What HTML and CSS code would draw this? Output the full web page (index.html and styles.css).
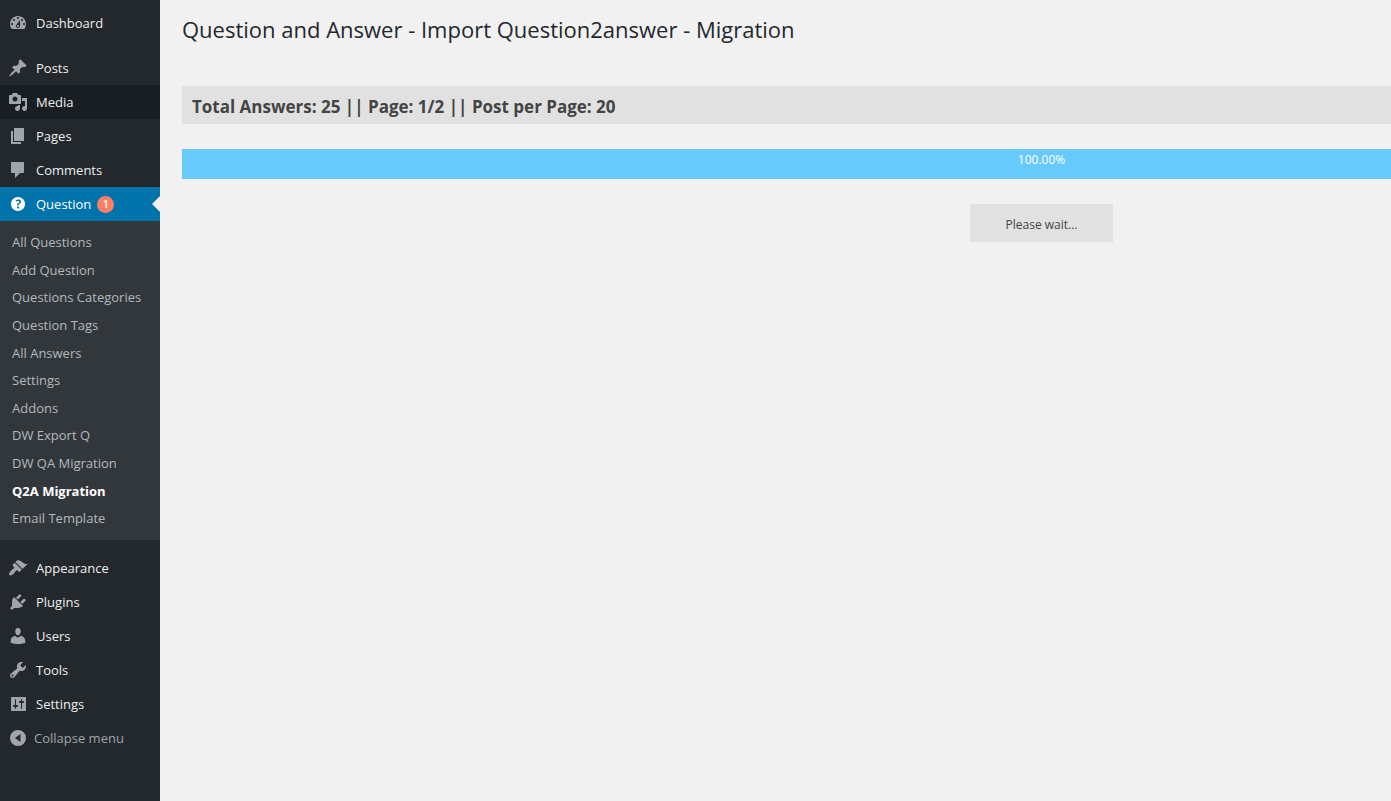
FILE: index.html
```html
<!DOCTYPE html>
<html lang="en">
<head>
    <meta charset="UTF-8">
    <meta name="viewport" content="width=device-width, initial-scale=1.0">
    <title>Question and Answer - Import Question2answer - Migration</title>
    <link rel="stylesheet" href="styles.css">
</head>
<body>
    <div class="admin">
        <nav class="sidebar">
            <ul class="menu">
                <li>
                    <a href="#" class="menu-link">
                        <svg class="icon" viewBox="0 0 20 20"><path fill-rule="evenodd" d="M3.76 16h12.48c1.1-1.37 1.76-3.11 1.76-5 0-4.42-3.58-8-8-8s-8 3.58-8 8c0 1.89.66 3.63 1.76 5zM10 4c.55 0 1 .45 1 1s-.45 1-1 1-1-.45-1-1 .45-1 1-1zM6 6c.55 0 1 .45 1 1s-.45 1-1 1-1-.45-1-1 .45-1 1-1zm8 0c.55 0 1 .45 1 1s-.45 1-1 1-1-.45-1-1 .45-1 1-1zm-5.37 5.55L12 7v6c0 1.1-.9 2-2 2s-2-.9-2-2c0-.57.24-1.08.63-1.45zM4 10c.55 0 1 .45 1 1s-.45 1-1 1-1-.45-1-1 .45-1 1-1zm12 0c.55 0 1 .45 1 1s-.45 1-1 1-1-.45-1-1 .45-1 1-1zm-5 3c0-.55-.45-1-1-1s-1 .45-1 1 .45 1 1 1 1-.45 1-1z"/></svg>
                        Dashboard
                    </a>
                </li>
                <li class="separator"></li>
                <li>
                    <a href="#" class="menu-link">
                        <svg class="icon" viewBox="0 0 20 20"><path d="M10.44 3.02l1.82-1.82 6.36 6.35-1.83 1.82c-1.05-.68-2.48-.57-3.41.36l-.75.75c-.92.93-1.04 2.35-.35 3.41l-1.83 1.82-2.41-2.41-2.8 2.79c-.42.42-3.38 2.71-3.8 2.29s1.86-3.39 2.28-3.81l2.79-2.79L4.1 9.36l1.83-1.82c1.05.69 2.48.57 3.4-.36l.75-.75c.93-.92 1.05-2.35.36-3.41z"/></svg>
                        Posts
                    </a>
                </li>
                <li>
                    <a href="#" class="menu-link hovered">
                        <svg class="icon" viewBox="0 0 20 20"><path fill-rule="evenodd" d="M13 11V4c0-.55-.45-1-1-1h-1.67L9 1H5L3.67 3H2c-.55 0-1 .45-1 1v7c0 .55.45 1 1 1h10c.55 0 1-.45 1-1zM7 4.5c1.38 0 2.5 1.12 2.5 2.5S8.38 9.5 7 9.5 4.5 8.38 4.5 7 5.62 4.5 7 4.5zM14 6h5v10.5c0 1.38-1.12 2.5-2.5 2.5S14 17.88 14 16.5s1.12-2.5 2.5-2.5c.17 0 .34.02.5.05V9h-3V6zm-4 8.05V13h2v3.5c0 1.38-1.12 2.5-2.5 2.5S7 17.88 7 16.5 8.12 14 9.5 14c.17 0 .34.02.5.05z"/></svg>
                        Media
                    </a>
                </li>
                <li>
                    <a href="#" class="menu-link">
                        <svg class="icon" viewBox="0 0 20 20"><path d="M6 15V2h10v13H6zm-1 1h8v2H3V5h2v11z"/></svg>
                        Pages
                    </a>
                </li>
                <li>
                    <a href="#" class="menu-link">
                        <svg class="icon" viewBox="0 0 20 20"><path d="M4 2h11c.55 0 1 .45 1 1v9c0 .55-.45 1-1 1h-3l-5 5v-5H4c-.55 0-1-.45-1-1V3c0-.55.45-1 1-1z"/></svg>
                        Comments
                    </a>
                </li>
                <li>
                    <a href="#" class="menu-link current">
                        <svg class="icon" viewBox="0 0 20 20"><path fill-rule="evenodd" d="M17 10c0-3.87-3.14-7-7-7-3.87 0-7 3.13-7 7s3.13 7 7 7c3.86 0 7-3.13 7-7zm-6.3 1.48H9.14v-.43c0-.38.08-.7.24-.98s.46-.57.88-.89c.41-.29.68-.53.81-.71.14-.18.2-.39.2-.62 0-.25-.09-.44-.28-.58-.19-.13-.45-.19-.79-.19-.58 0-1.25.15-2 .45l-.64-1.28c.87-.49 1.8-.74 2.77-.74.81 0 1.45.2 1.92.58.48.39.71.91.71 1.55 0 .43-.09.8-.29 1.11-.19.32-.57.67-1.11 1.06-.38.28-.61.49-.71.63-.1.15-.15.34-.15.57v.47zm-1.47 2.74c-.18-.17-.27-.42-.27-.73 0-.33.08-.58.26-.75s.43-.25.77-.25c.32 0 .57.09.75.26s.27.42.27.74c0 .3-.09.55-.27.72-.18.18-.43.27-.75.27-.33 0-.58-.09-.76-.26z"/></svg>
                        <span>Question</span>
                        <span class="count">1</span>
                    </a>
                    <ul class="submenu">
                        <li><a href="#">All Questions</a></li>
                        <li><a href="#">Add Question</a></li>
                        <li><a href="#">Questions Categories</a></li>
                        <li><a href="#">Question Tags</a></li>
                        <li><a href="#">All Answers</a></li>
                        <li><a href="#">Settings</a></li>
                        <li><a href="#">Addons</a></li>
                        <li><a href="#">DW Export Q</a></li>
                        <li><a href="#">DW QA Migration</a></li>
                        <li><a href="#" class="active">Q2A Migration</a></li>
                        <li><a href="#">Email Template</a></li>
                    </ul>
                </li>
                <li class="separator"></li>
                <li>
                    <a href="#" class="menu-link">
                        <svg class="icon" viewBox="0 0 20 20"><path d="M14.48 11.06L7.41 3.99l1.5-1.5c.5-.56 2.3-.47 3.51.32 1.21.8 1.43 1.28 2.91 2.1 1.18.64 2.45 1.26 4.45.85zm-.71.71L6.7 4.7 4.93 6.47c-.39.39-.39 1.02 0 1.41l1.06 1.06c.39.39.39 1.03 0 1.42-.6.6-1.43 1.11-2.21 1.69-.35.26-.7.53-1.01.84C1.43 14.23.4 16.08 1.4 17.07c.99 1 2.84-.03 4.18-1.36.31-.31.58-.66.85-1.02.57-.78 1.08-1.61 1.69-2.21.39-.39 1.02-.39 1.41 0l1.06 1.06c.39.39 1.02.39 1.41 0z"/></svg>
                        Appearance
                    </a>
                </li>
                <li>
                    <a href="#" class="menu-link">
                        <svg class="icon" viewBox="0 0 20 20"><path d="M13.11 4.36L9.87 7.6 8 5.73l3.24-3.24c.35-.34 1.05-.2 1.56.32.52.51.66 1.21.31 1.55zm-8 1.77l.91-1.12 9.01 9.01-1.19.84c-.71.71-2.63 1.16-3.82 1.16H6.14L4.9 17.26c-.59.59-1.54.59-2.12 0-.59-.58-.59-1.53 0-2.12l1.24-1.24v-3.88c0-1.13.4-3.19 1.09-3.89zm7.26 3.97l3.24-3.24c.34-.35 1.04-.21 1.55.31.52.51.66 1.21.31 1.55l-3.24 3.25z"/></svg>
                        Plugins
                    </a>
                </li>
                <li>
                    <a href="#" class="menu-link">
                        <svg class="icon" viewBox="0 0 20 20"><path d="M10 9.25c-2.27 0-2.73-3.44-2.73-3.44C7 4.02 7.82 2 9.97 2c2.16 0 2.98 2.02 2.71 3.81 0 0-.41 3.44-2.68 3.44zm0 2.57L12.72 10c2.39 0 4.52 2.33 4.52 4.53v2.49s-3.65 1.13-7.24 1.13c-3.65 0-7.24-1.13-7.24-1.13v-2.49c0-2.25 1.94-4.48 4.47-4.48z"/></svg>
                        Users
                    </a>
                </li>
                <li>
                    <a href="#" class="menu-link">
                        <svg class="icon" viewBox="0 0 20 20"><path fill-rule="evenodd" d="M16.68 9.77c-1.34 1.34-3.3 1.67-4.95.99l-5.41 6.52c-.99.99-2.59.99-3.58 0s-.99-2.59 0-3.57l6.52-5.42c-.68-1.65-.35-3.61.99-4.95 1.28-1.28 3.12-1.62 4.72-1.06l-2.89 2.89 2.82 2.82 2.86-2.87c.53 1.58.18 3.39-1.08 4.65zM3.81 16.21c.4.39 1.04.39 1.43 0 .4-.4.4-1.04 0-1.43-.39-.4-1.03-.4-1.43 0-.39.39-.39 1.03 0 1.43z"/></svg>
                        Tools
                    </a>
                </li>
                <li>
                    <a href="#" class="menu-link">
                        <svg class="icon" viewBox="0 0 20 20"><path fill-rule="evenodd" d="M18 16V4c0-.55-.45-1-1-1H4c-.55 0-1 .45-1 1v12c0 .55.45 1 1 1h13c.55 0 1-.45 1-1zM8 11h1c.55 0 1 .45 1 1s-.45 1-1 1H8v1.5c0 .28-.22.5-.5.5s-.5-.22-.5-.5V13H6c-.55 0-1-.45-1-1s.45-1 1-1h1V5.5c0-.28.22-.5.5-.5s.5.22.5.5V11zm5-2h-1c-.55 0-1-.45-1-1s.45-1 1-1h1V5.5c0-.28.22-.5.5-.5s.5.22.5.5V7h1c.55 0 1 .45 1 1s-.45 1-1 1h-1v5.5c0 .28-.22.5-.5.5s-.5-.22-.5-.5V9z"/></svg>
                        Settings
                    </a>
                </li>
                <li>
                    <button type="button" class="collapse">
                        <svg class="icon" viewBox="0 0 20 20"><path fill-rule="evenodd" d="M10 2a8 8 0 1 0 0 16 8 8 0 0 0 0-16zM12.500 6v8L7 10z"/></svg>
                        Collapse menu
                    </button>
                </li>
            </ul>
        </nav>

        <main class="content">
            <div class="wrap">
                <h1>Question and Answer - Import Question2answer - Migration</h1>
                <h3 class="summary">Total Answers: 25 || Page: 1/2 || Post per Page: 20</h3>
                <div class="progress">
                    <div class="progress-bar" style="width: 100%">100.00%</div>
                </div>
                <button type="button" class="wait">Please wait...</button>
            </div>
        </main>
    </div>
</body>
</html>
```

FILE: styles.css
```css
* {
    margin: 0;
    padding: 0;
    box-sizing: border-box;
}

body {
    background: #f1f1f1;
    color: #444;
    font-family: 'Segoe UI', 'Open Sans', 'Noto Sans', sans-serif;
    font-size: 13px;
}

.admin {
    display: flex;
    min-height: 100vh;
}

/* Sidebar */
.sidebar {
    flex: 0 0 160px;
    padding-top: 6px;
    background: #23282d;
}

.menu, .submenu {
    list-style: none;
}

.menu-link, .collapse {
    display: flex;
    align-items: center;
    width: 100%;
    height: 34px;
    padding-left: 8px;
    gap: 8px;
    color: #eee;
    line-height: 20px;
    text-decoration: none;
}

.icon {
    flex: none;
    width: 20px;
    height: 20px;
    fill: #a0a5aa;
}

.hovered {
    background: #191e23;
}

.current {
    position: relative;
    background: #0073aa;
    color: #fff;
}

.current .icon {
    fill: #fff;
}

/* Arrow pointing at the content */
.current::after {
    content: '';
    position: absolute;
    top: 9px;
    right: 0;
    border: 8px solid transparent;
    border-left-width: 0;
    border-right-color: #f1f1f1;
}

.count {
    width: 17px;
    height: 17px;
    margin-left: -2px;
    border-radius: 50%;
    background: #fd8064;
    font-size: 10px;
    font-weight: 600;
    line-height: 17px;
    text-align: center;
}

.separator {
    height: 11px;
}

.submenu {
    display: grid;
    grid-auto-rows: 1fr;
    min-height: 319px;
    padding: 7px 0 8px;
    background: #32373c;
}

.submenu a {
    display: block;
    padding-left: 12px;
    color: #b4b9be;
    line-height: 28px;
    text-decoration: none;
}

.submenu li {
    height: 27px;
}

.submenu .active {
    color: #fff;
    font-weight: 700;
}

.collapse {
    gap: 6px;
    border: none;
    background: none;
    color: #a0a5aa;
    font-family: inherit;
    font-size: 13px;
    cursor: pointer;
}

/* Content */
.content {
    flex: 1;
    min-width: 0;
    padding-left: 22px;
    overflow: hidden;
}

/* The migration screen keeps its desktop width */
.wrap {
    min-width: 1719px;
    padding-top: 14px;
}

h1 {
    color: #23282d;
    font-size: 22px;
    font-weight: 400;
    line-height: 30px;
}

.summary {
    margin: 42px 0 25px;
    padding: 4px 10px 0;
    background: #e1e1e1;
    font-size: 17px;
    line-height: 34px;
}

.progress-bar {
    height: 30px;
    background: #68c9fc;
    color: #fff;
    font-size: 12px;
    line-height: 21px;
    text-align: center;
}

.wait {
    display: block;
    width: 143px;
    height: 38px;
    margin: 25px auto 0;
    padding-top: 2px;
    border: none;
    background: #e1e1e1;
    color: #444;
    font-family: inherit;
    font-size: 12px;
}
```
